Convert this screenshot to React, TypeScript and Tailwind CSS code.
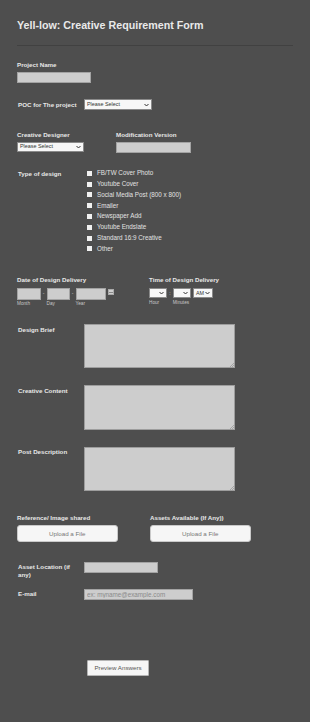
import React from "react";

const CHECK_OPTIONS = [
  "FB/TW Cover Photo",
  "Youtube Cover",
  "Social Media Post (800 x 800)",
  "Emailer",
  "Newspaper Add",
  "Youtube Endslate",
  "Standard 16:9 Creative",
  "Other",
];

const Chevron = () => (
  <svg width="5" height="4" viewBox="0 0 10 6" className="shrink-0">
    <path d="M1 1l4 4 4-4" fill="none" stroke="#333" strokeWidth="2" />
  </svg>
);

// fake select box: text on the left, chevron on the right
const SelectBox = ({ text = "", className = "" }: { text?: string; className?: string }) => (
  <div
    className={`flex items-center justify-between bg-[#f7f7f7] border border-[#8a8a8a] pl-[2px] pr-[2px] text-[5.4px] leading-none text-[#333] ${className}`}
  >
    <span>{text}</span>
    <Chevron />
  </div>
);

const Label = ({ children, className = "" }: { children: React.ReactNode; className?: string }) => (
  <div className={`text-[6.2px] leading-[8px] font-bold text-[#e8e8e8] ${className}`}>{children}</div>
);

const TextBox = ({ className = "", placeholder }: { className?: string; placeholder?: string }) => (
  <input
    placeholder={placeholder}
    className={`block bg-[#cdcdcd] border border-[#a3a3a3] px-[2px] text-[6.3px] leading-none text-[#333] placeholder:text-[#8a8a8a] ${className}`}
  />
);

// textarea with a small resize grip drawn over the corner
const Area = () => (
  <div className="relative w-[151px] h-[44.5px]">
    <textarea className="block w-full h-full resize-none bg-[#cdcdcd] border border-[#9d9d9d]" />
    <svg width="4" height="4" viewBox="0 0 4 4" className="absolute right-[1px] bottom-[1px] pointer-events-none">
      <path d="M4 0L0 4M4 2L2 4" stroke="#8a8a8a" strokeWidth="0.6" />
    </svg>
  </div>
);

const Sub = ({ children, className = "" }: { children?: React.ReactNode; className?: string }) => (
  <div className={`text-[4.7px] leading-[5px] text-[#c8c8c8] ${className}`}>{children}</div>
);

export default function App() {
  return (
    <div className="w-[310px] min-h-[722px] bg-[#4e4e4e] font-['Liberation_Sans',Arial,sans-serif]">
      <div className="px-[17px] pt-[19px] pb-[40px]">
        <h1 className="text-[10.7px] leading-[12px] font-bold text-[#e9e9e9]">
          Yell-low: Creative Requirement Form
        </h1>
        <div className="mt-[14px] border-t border-[#414141]" />

        {/* project name */}
        <div className="mt-[15px]">
          <Label>Project Name</Label>
          <TextBox className="mt-[3px] w-[74px] h-[11px]" />
        </div>

        {/* poc */}
        <div className="mt-[16px] flex items-center h-[11px]">
          <Label className="w-[67px] pl-[1px]">POC for The project</Label>
          <SelectBox text="Please Select" className="w-[68px] h-[11px]" />
        </div>

        {/* designer + version */}
        <div className="mt-[21px] flex">
          <div className="w-[99px]">
            <Label>Creative Designer</Label>
            <SelectBox text="Please Select" className="mt-[3px] w-[67px] h-[10px]" />
          </div>
          <div>
            <Label>Modification Version</Label>
            <TextBox className="mt-[3px] w-[74.5px] h-[11px]" />
          </div>
        </div>

        {/* type of design */}
        <div className="mt-[15px] flex">
          <div className="w-[67px] pl-[1px] text-[6.2px] leading-[11px] font-bold text-[#e8e8e8]">
            Type of design
          </div>
          <div className="pl-[3px]">
            {CHECK_OPTIONS.map((opt) => (
              <div key={opt} className="flex items-center gap-[5px] h-[10.8px]">
                <span className="block w-[5px] h-[5px] bg-[#f1f1f1]" />
                <span className="text-[6.3px] leading-none text-[#e2e2e2]">{opt}</span>
              </div>
            ))}
          </div>
        </div>

        {/* date / time */}
        <div className="mt-[22px] flex">
          <div className="w-[132px]">
            <Label>Date of Design Delivery</Label>
            <div className="mt-[4px] flex items-start">
              <TextBox className="w-[23.5px] h-[11.5px]" />
              <span className="w-[6px] text-center text-[5px] leading-[11.5px] text-[#ccc]">-</span>
              <TextBox className="w-[23px] h-[11.5px]" />
              <span className="w-[6px] text-center text-[5px] leading-[11.5px] text-[#ccc]">-</span>
              <TextBox className="w-[30px] h-[11.5px]" />
              <span className="ml-[2px] mt-[0.5px] flex flex-col justify-end w-[6px] h-[6px] bg-[#cfcfcf] border border-[#aaa]">
                <span className="block h-[2px] border-t border-[#888]" />
              </span>
            </div>
            <div className="mt-[1px] flex">
              <Sub className="w-[29.5px]">Month</Sub>
              <Sub className="w-[29px]">Day</Sub>
              <Sub>Year</Sub>
            </div>
          </div>
          <div>
            <Label>Time of Design Delivery</Label>
            <div className="mt-[4px] flex items-center">
              <SelectBox className="w-[18px] h-[10px]" />
              <span className="w-[5.7px] text-center text-[5px] leading-none text-[#ddd]">:</span>
              <SelectBox className="w-[18.3px] h-[10px]" />
              <SelectBox text="AM" className="ml-[2px] w-[20px] h-[10px]" />
            </div>
            <div className="mt-[1.5px] flex">
              <Sub className="w-[23.7px]">Hour</Sub>
              <Sub>Minutes</Sub>
            </div>
          </div>
        </div>

        {/* text areas */}
        <div className="mt-[18px] flex">
          <Label className="w-[67px] pl-[1px] pt-[2px]">Design Brief</Label>
          <Area />
        </div>
        <div className="mt-[17px] flex">
          <Label className="w-[67px] pl-[1px] pt-[1.5px]">Creative Content</Label>
          <Area />
        </div>
        <div className="mt-[17px] flex">
          <Label className="w-[67px] pl-[1px] pt-[1px]">Post Description</Label>
          <Area />
        </div>

        {/* uploads */}
        <div className="mt-[22.5px] flex">
          <div className="w-[133px]">
            <Label>Reference/ Image shared</Label>
            <button className="mt-[3.3px] block w-[100.5px] h-[17px] rounded-[3px] bg-[#f6f6f6] border border-[#c9c9c9] text-[6.2px] text-[#777]">
              Upload a File
            </button>
          </div>
          <div>
            <Label>Assets Available (If Any))</Label>
            <button className="mt-[3.3px] block w-[100.5px] h-[17px] rounded-[3px] bg-[#f6f6f6] border border-[#c9c9c9] text-[6.2px] text-[#777]">
              Upload a File
            </button>
          </div>
        </div>

        {/* asset location */}
        <div className="mt-[20px] flex">
          <Label className="w-[67px] pl-[1px] pt-[1px]">
            Asset Location (if
            <br />
            any)
          </Label>
          <TextBox className="w-[74px] h-[10.7px]" />
        </div>

        {/* email */}
        <div className="mt-[10px] flex">
          <Label className="w-[67px] pl-[1px] pt-[1px]">E-mail</Label>
          <TextBox placeholder="ex: myname@example.com" className="w-[109px] h-[10.7px]" />
        </div>

        <button className="mt-[60px] ml-[70px] block w-[62px] h-[16px] bg-[#f6f6f6] border border-[#b5b5b5] rounded-[1px] text-[6.2px] text-[#555]">
          Preview Answers
        </button>
      </div>
    </div>
  );
}
